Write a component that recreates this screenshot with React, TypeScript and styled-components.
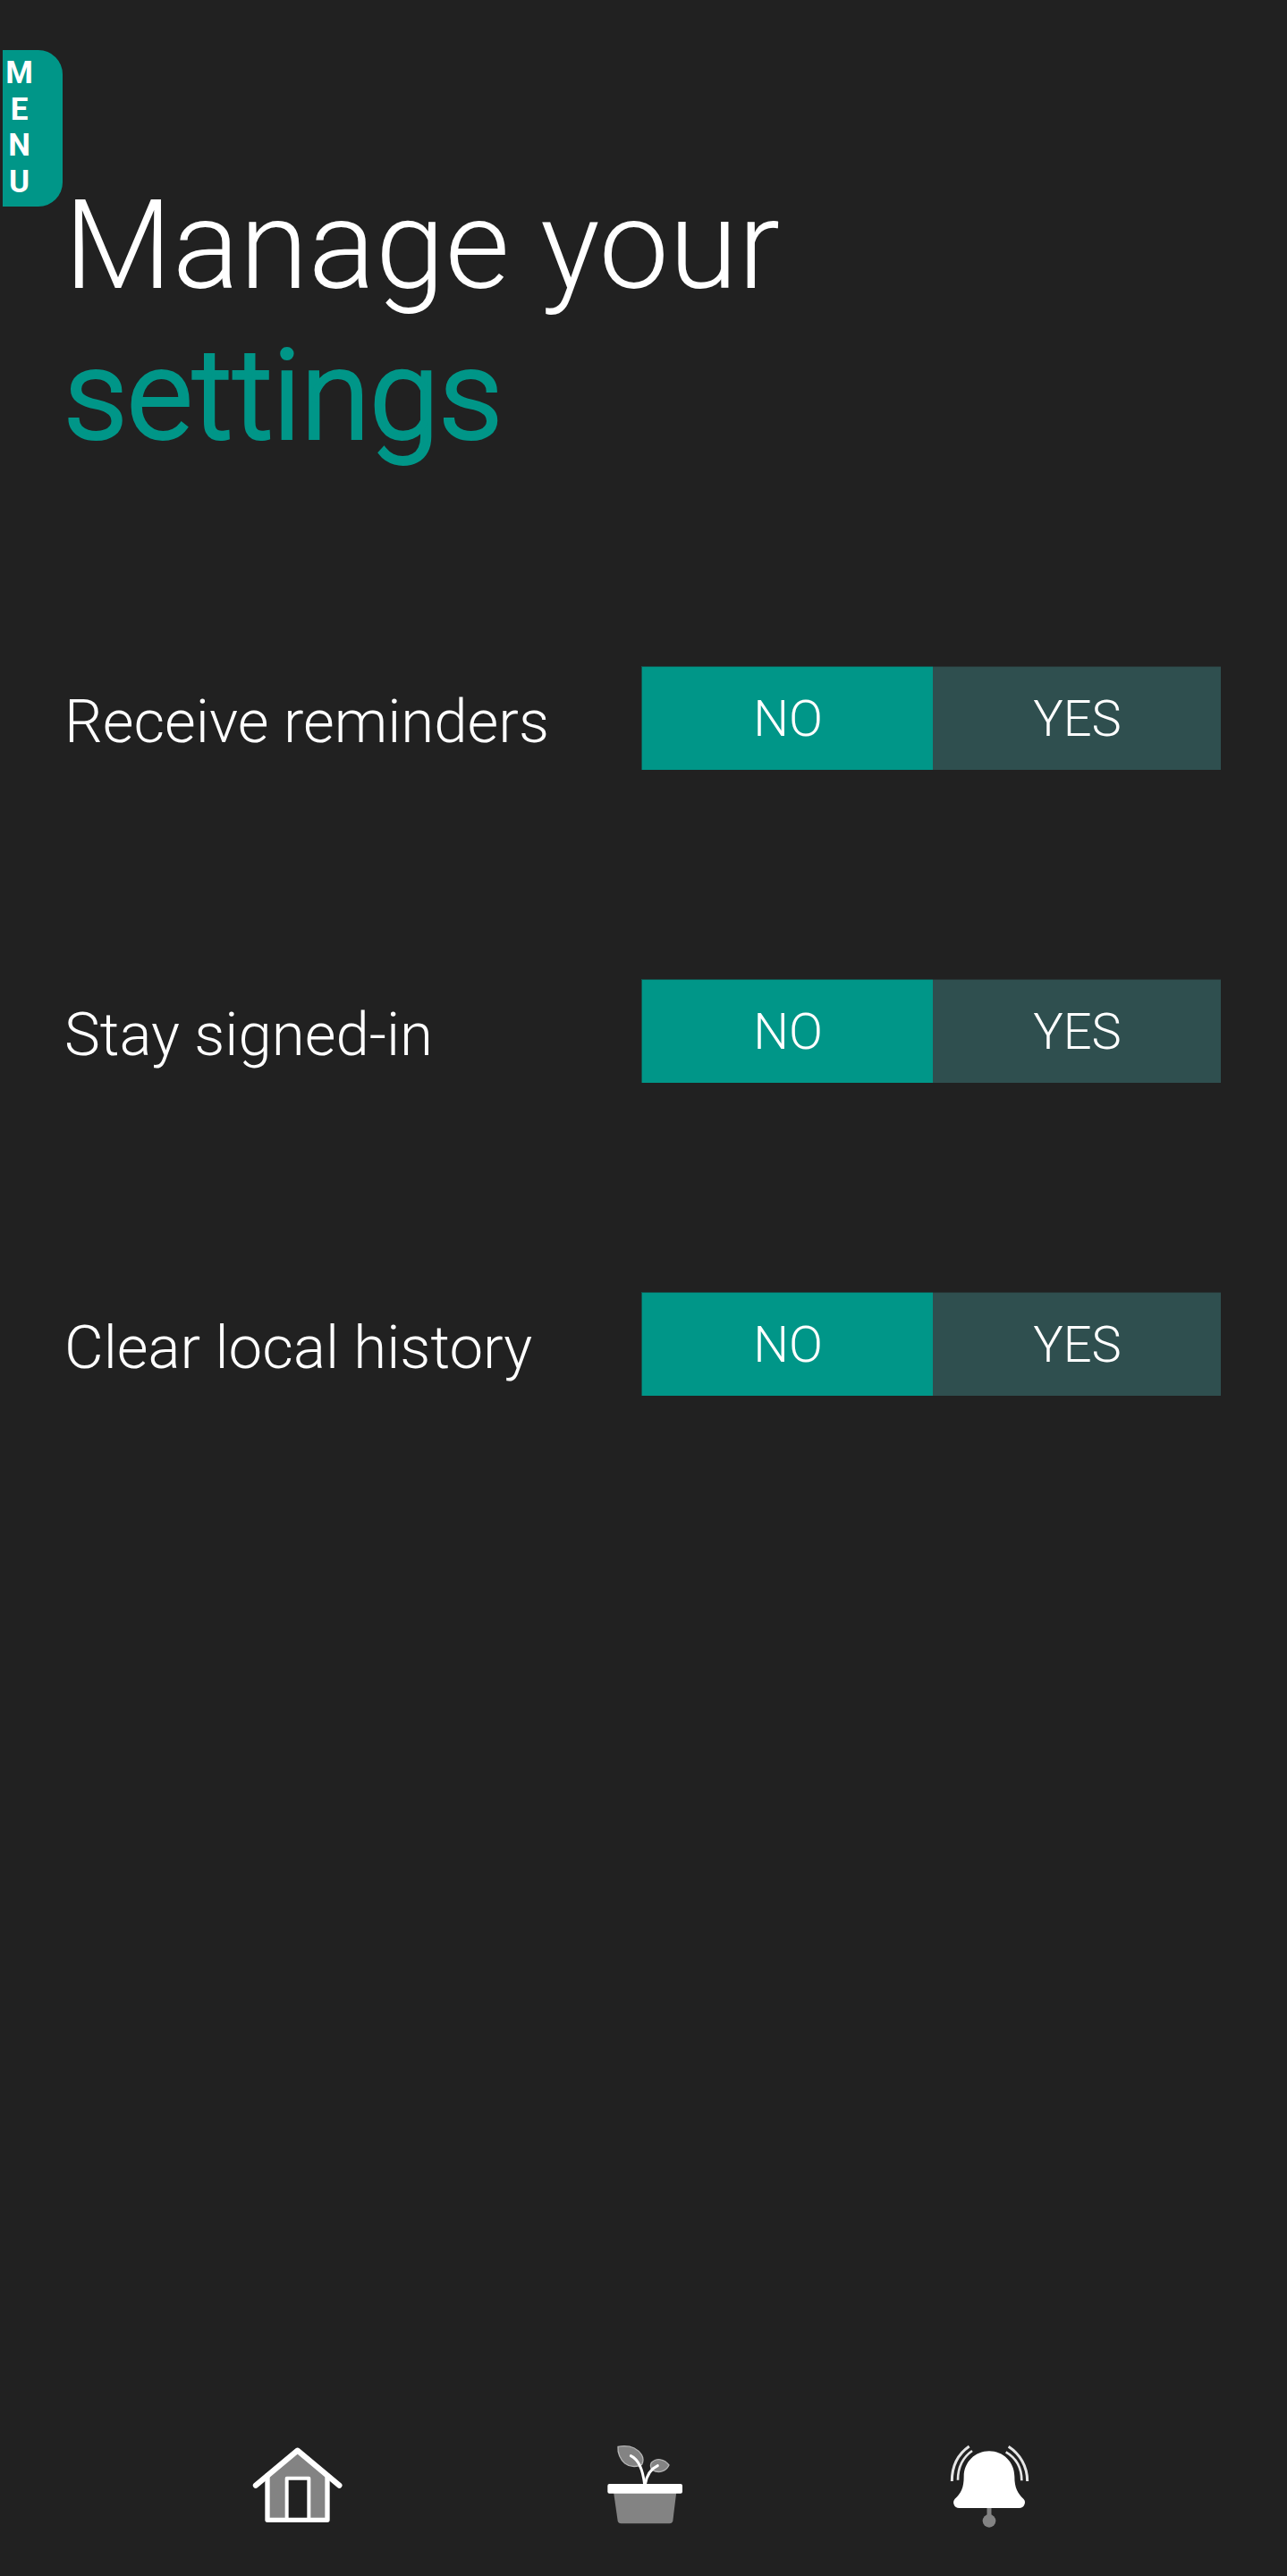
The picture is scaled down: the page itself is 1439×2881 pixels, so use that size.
import React, { useState } from "react";
import styled, { createGlobalStyle } from "styled-components";

const TEAL = "#009688";
const SLATE = "#2f4f4f";
const INK = "#212121";
const GREY = "#838383";

const GlobalStyle = createGlobalStyle`
  *, *::before, *::after { box-sizing: border-box; }
  html, body { margin: 0; background: ${INK}; }
`;

const Screen = styled.main`
  position: relative;
  display: flex;
  flex-direction: column;
  width: 1439px;
  height: 2881px;
  overflow: hidden;
  background: ${INK};
  color: #fff;
  font-family: Roboto, sans-serif;
  font-weight: 300;
`;

const MenuTab = styled.button`
  position: absolute;
  top: 56px;
  left: 3px;
  display: flex;
  flex-direction: column;
  width: 67px;
  height: 175px;
  padding: 6px 0 0 0.5px;
  border: 0;
  border-radius: 0 27px 27px 0;
  background: ${TEAL};
  color: #fff;
  font: 700 35px/40.66px Roboto, sans-serif;
`;

const MenuLetter = styled.span`
  width: 36px;
  text-align: center;
`;

const Title = styled.h1`
  margin: 0;
  padding: 190px 71.5px 0;
  font-size: 140px;
  font-weight: 300;
  line-height: 168px;
`;

const Accent = styled.span`
  display: block;
  color: ${TEAL};
  -webkit-text-stroke: 4px ${TEAL};
`;

const SettingsList = styled.section`
  display: flex;
  flex-direction: column;
  gap: 234px;
  padding: 219px 74px 0 72px;
`;

const SettingRow = styled.div`
  display: flex;
  justify-content: space-between;
  height: 116px;
`;

const Label = styled.span`
  padding-top: 9px;
  font-size: 67.2px;
  line-height: 106px;
  white-space: nowrap;
`;

const Toggle = styled.div`
  display: grid;
  grid-template-columns: 326px 322px;
`;

const Option = styled.button<{ $active: boolean }>`
  padding: 1px 0 0 1px;
  border: 0 solid rgba(33, 33, 33, 0.55);
  border-top-width: 1px;
  background: ${(p) => (p.$active ? TEAL : SLATE)};
  color: #fff;
  font: 300 56px/66px Roboto, sans-serif;

  &:first-child {
    border-left-width: 1px;
  }
`;

const Nav = styled.nav`
  display: flex;
  justify-content: space-between;
  margin-top: auto;
  padding: 0 269px 36px 275px;
`;

const NavButton = styled.button`
  padding: 0;
  border: 0;
  background: none;
  line-height: 0;
`;

const Icon = styled.svg`
  width: 115px;
  height: 125px;
`;

const HomeIcon = () => (
  <Icon viewBox="15 0 345 375">
    <path d="M87 146 L188 62 L288 146 V294 H87Z" fill={GREY} />
    <path d="M152 294 V155 H226 V294" fill={INK} />
    <g fill="none" stroke="#fff" strokeLinejoin="round" strokeLinecap="round">
      <path d="M87 145 V295 H288 V145" strokeWidth="16" />
      <path d="M152 292 V155 H226 V292" strokeWidth="12" />
      <path d="M48 179 L188 62 L328 179" strokeWidth="19" />
    </g>
  </Icon>
);

const PlantIcon = () => (
  <Icon viewBox="0 0 345 375">
    <path d="M63 200 H274 L262 298 Q260 307 251 307 H88 Q79 307 77 298Z" fill={GREY} />
    <g fill={GREY} stroke="#b4b4b4" strokeWidth="4">
      <path d="M78 49 C112 43 141 53 157 76 C163 86 163 98 158 109 C139 119 116 117 101 105 C86 92 76 70 78 49Z" />
      <path d="M249 111 C233 89 207 86 190 103 C186 110 187 120 193 127 C215 140 239 132 249 111Z" />
    </g>
    <g fill="none" stroke="#fff" strokeWidth="9" strokeLinecap="round">
      <path d="M121 80 C151 94 162 132 167 176" />
      <path d="M211 113 C187 124 174 145 169 176" />
    </g>
    <rect x="43" y="174" width="251" height="32" rx="6" fill="#fff" />
  </Icon>
);

const BellIcon = () => (
  <Icon viewBox="15 0 345 375">
    <path d="M168 252 V290" stroke={GREY} strokeWidth="15" />
    <circle cx="168" cy="298" r="22" fill={GREY} />
    <path
      d="M168 64 C215 64 253 101 253 149 C253 188 264 205 283 224 C289 230 289 237 286 244 C283 252 277 255 269 255 H67 C59 255 53 252 50 244 C47 237 48 230 53 224 C73 205 83 188 83 149 C83 101 121 64 168 64Z"
      fill="#fff"
    />
    <g fill="none" stroke="#e6e6e6">
      <path d="M101 48 C65 73 43 114 43 165" strokeWidth="9" />
      <path d="M111 63 C78 86 63 119 63 161" strokeWidth="8" />
      <path d="M233 49 C271 74 296 115 296 165" strokeWidth="9" />
      <path d="M224 67 C257 86 277 119 277 163" strokeWidth="8" />
    </g>
  </Icon>
);

const SETTINGS = ["Receive reminders", "Stay signed-in", "Clear local history"];

function Setting({ name }: { name: string }) {
  const [on, setOn] = useState(false);
  return (
    <SettingRow>
      <Label>{name}</Label>
      <Toggle>
        <Option $active={!on} onClick={() => setOn(false)}>NO</Option>
        <Option $active={on} onClick={() => setOn(true)}>YES</Option>
      </Toggle>
    </SettingRow>
  );
}

export default function App() {
  return (
    <Screen>
      <GlobalStyle />
      <Title>
        Manage your
        <Accent>settings</Accent>
      </Title>
      <SettingsList>
        {SETTINGS.map((name) => <Setting key={name} name={name} />)}
      </SettingsList>
      <Nav>
        <NavButton aria-label="Home"><HomeIcon /></NavButton>
        <NavButton aria-label="Plants"><PlantIcon /></NavButton>
        <NavButton aria-label="Reminders"><BellIcon /></NavButton>
      </Nav>
      <MenuTab>
        {"MENU".split("").map((letter) => <MenuLetter key={letter}>{letter}</MenuLetter>)}
      </MenuTab>
    </Screen>
  );
}
